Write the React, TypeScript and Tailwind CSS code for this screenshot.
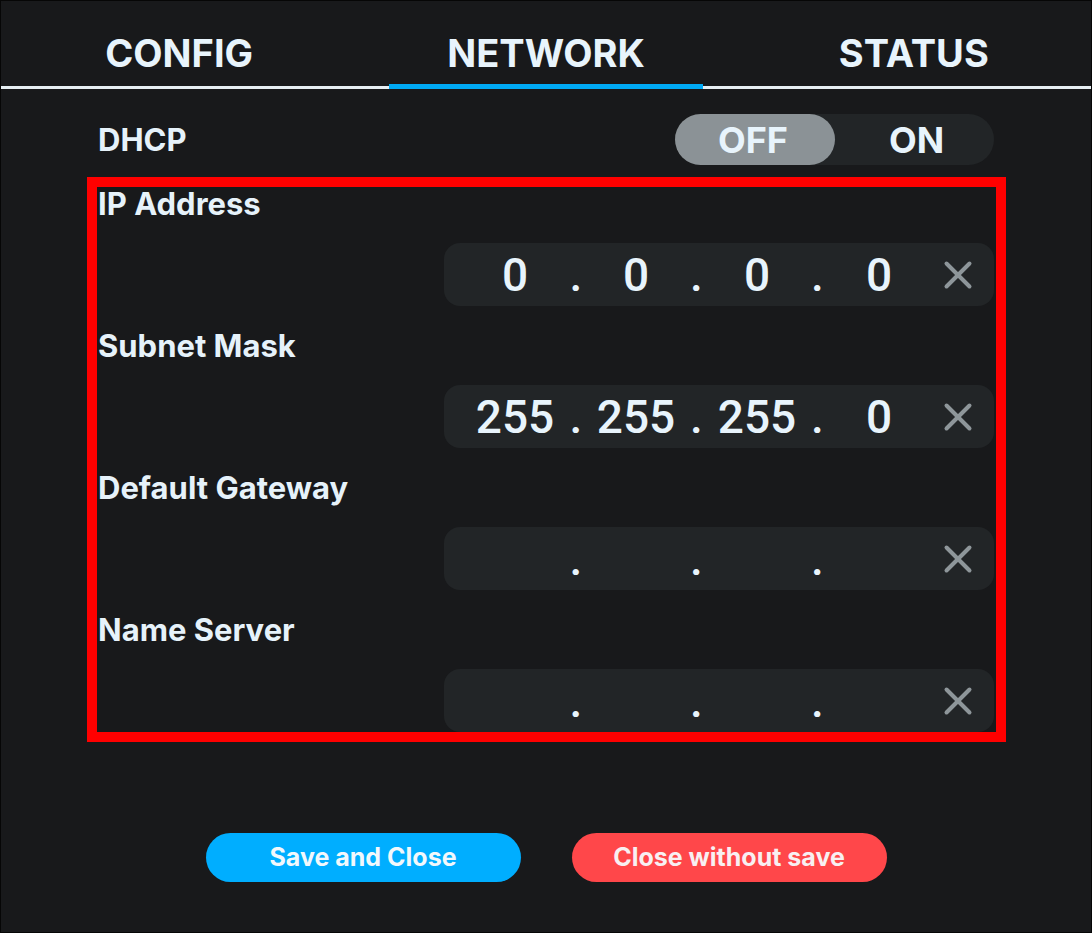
import React from "react";

const font = { fontFamily: "Inter, Roboto, 'Liberation Sans', sans-serif" };
const digitFont = { fontFamily: "Roboto, 'Liberation Sans', sans-serif" };

function XIcon() {
  return (
    <svg width="30" height="30" viewBox="0 0 30 30" className="block">
      <line x1="3.5" y1="3.5" x2="26.5" y2="26.5" stroke="#8e969a" strokeWidth="4" strokeLinecap="round" />
      <line x1="26.5" y1="3.5" x2="3.5" y2="26.5" stroke="#8e969a" strokeWidth="4" strokeLinecap="round" />
    </svg>
  );
}

function IpInput({ octets }: { octets: string[] }) {
  return (
    <div
      className="ml-auto flex h-[63px] w-[550px] items-center rounded-[16px] bg-[#222527] pl-[20px] text-[46px] font-medium leading-none text-[#e8f4fc]"
      style={digitFont}
    >
      <div className="w-[102px] text-center">{octets[0]}</div>
      <div className="w-[20px] text-center">.</div>
      <div className="w-[100px] text-center">{octets[1]}</div>
      <div className="w-[21px] text-center">.</div>
      <div className="w-[100px] text-center">{octets[2]}</div>
      <div className="w-[21px] text-center">.</div>
      <div className="w-[102px] text-center">{octets[3]}</div>
      <div className="ml-[13px] flex h-[30px] w-[30px] items-center justify-center">
        <XIcon />
      </div>
    </div>
  );
}

function Field({ label, octets, last }: { label: string; octets: string[]; last?: boolean }) {
  return (
    <div className={last ? "" : "mb-[23px]"}>
      <div className="h-[34px] pl-[1px] text-[31px] font-bold leading-[34px] text-[#e6f2fa]">{label}</div>
      <div className="mt-[22px] flex">
        <IpInput octets={octets} />
      </div>
    </div>
  );
}

export default function App() {
  return (
    <div className="h-[933px] w-[1092px] overflow-hidden border border-[#060606] bg-[#18191b]" style={font}>
      {/* Tabs */}
      <div className="flex">
        {["CONFIG", "NETWORK", "STATUS"].map((t) => {
          const active = t === "NETWORK";
          const shift = t === "CONFIG" ? "pr-[7px]" : t === "STATUS" ? "pl-[9px]" : "";
          return (
            <div key={t} className="flex flex-1 flex-col">
              <div
                className={`flex h-[83px] items-end justify-center pb-[12px] text-[38px] font-bold leading-none text-[#e8f4fc] ${shift}`}
              >
                {t}
              </div>
              <div className="flex h-[5px] items-end">
                <div className="h-[3px] flex-1 bg-[#e6eef3]" />
                {active && <div className="h-[5px] w-[314px] bg-[#00aaf5]" />}
                {active && <div className="h-[3px] flex-1 bg-[#e6eef3]" />}
              </div>
            </div>
          );
        })}
      </div>

      {/* DHCP */}
      <div className="mt-[25px] flex items-center justify-between pl-[97px] pr-[97px]">
        <div className="text-[31px] font-bold leading-none text-[#e6f2fa]">DHCP</div>
        <div className="flex h-[51px] w-[319px] rounded-full bg-[#222527]">
          <div className="flex w-[160px] items-center justify-center pr-[4px] rounded-full bg-[#8b9296] text-[36px] font-bold text-[#e8f4fc]">
            OFF
          </div>
          <div className="flex flex-1 items-center justify-center pl-[4px] text-[36px] font-bold text-[#e8f4fc]">ON</div>
        </div>
      </div>

      {/* Red highlighted fields */}
      <div className="ml-[86px] mt-[12px] w-[919px] border-[10px] border-[#ff0000] pr-[2px]">
        <Field label="IP Address" octets={["0", "0", "0", "0"]} />
        <Field label="Subnet Mask" octets={["255", "255", "255", "0"]} />
        <Field label="Default Gateway" octets={["", "", "", ""]} />
        <Field label="Name Server" octets={["", "", "", ""]} last />
      </div>

      {/* Buttons */}
      <div className="mt-[91px] flex justify-center gap-[51px]">
        <button className="flex h-[49px] w-[315px] items-center justify-center rounded-full bg-[#00aeff] text-[25px] font-bold text-[#f2f8fc]">
          Save and Close
        </button>
        <button className="flex h-[49px] w-[315px] items-center justify-center rounded-full bg-[#ff474a] text-[25px] font-bold text-[#f8f0f2]">
          Close without save
        </button>
      </div>
    </div>
  );
}
